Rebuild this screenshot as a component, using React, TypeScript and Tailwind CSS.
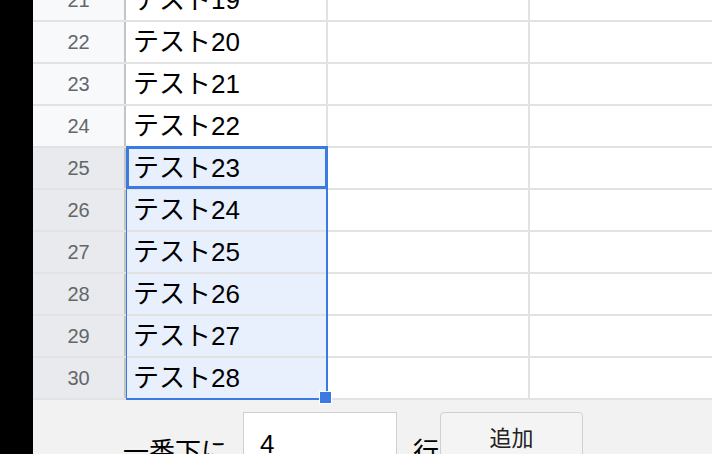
const rows = [21, 22, 23, 24, 25, 26, 27, 28, 29, 30];
const firstSelected = 25;

function Row({ n }: { n: number }) {
  const selected = n >= firstSelected;
  return (
    <div className="flex h-[42px] shrink-0 border-b-2 border-[#e2e2e2]">
      <div
        className={`flex w-[93px] shrink-0 items-center justify-center border-r-2 border-[#c4c4c4] text-[20px] leading-none text-[#63666a] ${
          selected ? 'bg-[#e8eaed]' : 'bg-[#f8f9fa]'
        }`}
      >
        {n}
      </div>
      <div
        className={`flex w-[202px] shrink-0 items-center border-r-2 border-[#e2e2e2] pl-[7px] text-[26px] leading-none text-black ${
          selected ? 'bg-[#e8f0fe]' : 'bg-white'
        }`}
      >
        テスト{n - 2}
      </div>
      <div className="w-[202px] shrink-0 border-r-2 border-[#e2e2e2] bg-white" />
      <div className="flex-1 bg-white" />
    </div>
  );
}

export default function App() {
  return (
    <div
      className="flex h-[454px] w-[712px] overflow-hidden bg-white"
      style={{ fontFamily: '"Liberation Sans", "Noto Sans CJK JP", sans-serif' }}
    >
      <div className="w-[33px] shrink-0 bg-black" />

      <div className="flex flex-1 flex-col">
        {/* Sheet grid */}
        <div className="relative h-[400px] shrink-0">
          <div className="-mt-[20px] flex flex-col">
            {rows.map((n) => (
              <Row key={n} n={n} />
            ))}
          </div>

          {/* Selected range */}
          <div className="pointer-events-none absolute left-[93px] top-[147px] h-[253px] w-[202px] border-b-2 border-l border-r-2 border-[#3b7ae0]" />
          {/* Active cell */}
          <div className="pointer-events-none absolute left-[93px] top-[146px] h-[43px] w-[202px] border-[3px] border-[#3b7ae0]" />
          {/* Fill handle */}
          <div className="absolute left-[286px] top-[391px] z-10 h-[13px] w-[13px] border border-white bg-[#3b7ae0]" />
        </div>

        {/* Add rows bar */}
        <div className="flex flex-1 items-start bg-[#f2f2f2] pl-[90px] pt-[12px]">
          <span className="mt-[27px] text-[26px] leading-none text-black">一番下に</span>
          <div className="ml-[16px] h-[70px] w-[154px] shrink-0 border border-[#cfcfcf] bg-white pl-[16px] pt-[18px] text-[26px] leading-none text-black">
            4
          </div>
          <span className="ml-[16px] mt-[27px] text-[26px] leading-none text-black">行</span>
          <div className="ml-[1px] flex h-[70px] w-[143px] shrink-0 justify-center rounded-[4px] border border-[#d0d0d0] bg-[#f4f4f4] pt-[15px] text-[22px] leading-none text-[#222]">
            追加
          </div>
        </div>
      </div>
    </div>
  );
}
